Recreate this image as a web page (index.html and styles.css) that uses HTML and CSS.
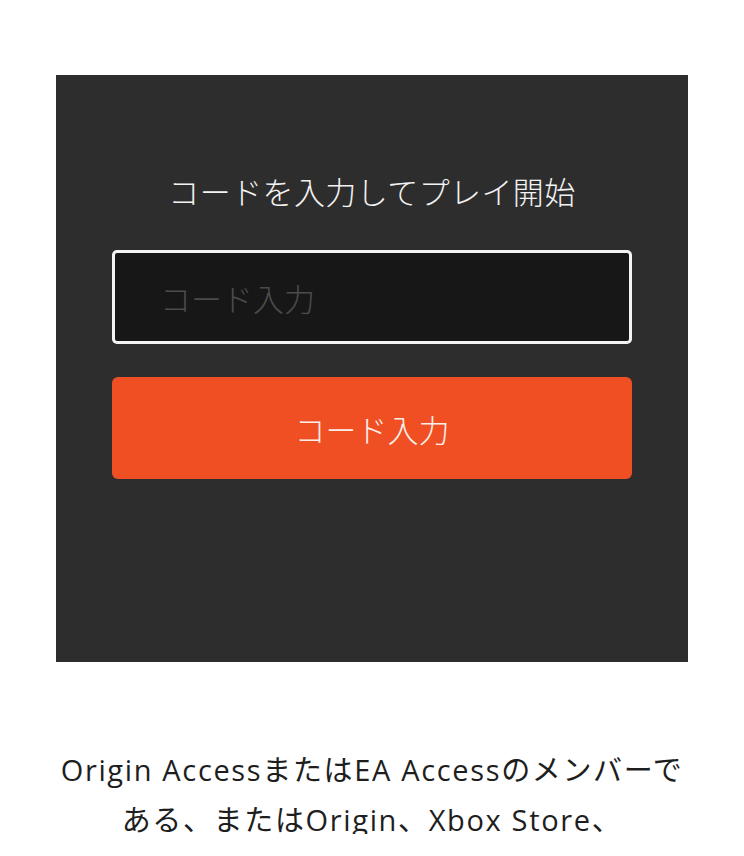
FILE: index.html
```html
<!DOCTYPE html>
<html lang="ja">
<head>
<meta charset="utf-8">
<title>コード入力</title>
<link rel="stylesheet" href="styles.css">
</head>
<body>
<main class="page">
  <section class="panel">
    <h1 class="panel-title">コードを入力してプレイ開始</h1>
    <input class="code-input" type="text" placeholder="コード入力">
    <button class="code-button" type="button">コード入力</button>
  </section>
  <div class="info-clip">
    <p class="info">Origin AccessまたはEA Accessのメンバーである、またはOrigin、Xbox Store、PlayStation Storeで購入した場合</p>
  </div>
</main>
</body>
</html>
```
FILE: styles.css
```css
html, body {
  margin: 0;
  padding: 0;
  background: #ffffff;
}
body {
  font-family: "Noto Sans CJK JP", "Noto Sans", sans-serif;
  width: 744px;
  height: 856px;
  overflow: hidden;
}
.page {
  display: flex;
  flex-direction: column;
  align-items: center;
  padding-top: 75px;
}
.panel {
  box-sizing: border-box;
  width: 632px;
  height: 587px;
  background: #2d2d2d;
  display: flex;
  flex-direction: column;
  align-items: center;
  padding-top: 94px;
}
.panel-title {
  margin: 0;
  font-size: 31px;
  font-weight: 300;
  letter-spacing: 0.4px;
  line-height: 44px;
  color: #f2f2f2;
  text-align: center;
}
.code-input {
  box-sizing: border-box;
  margin-top: 37px;
  width: 520px;
  height: 94px;
  background: #171717;
  border: 3px solid #f4f4f4;
  border-radius: 5px;
  padding: 0 0 0 45px;
  font-family: "Noto Sans CJK JP", "Noto Sans", sans-serif;
  font-size: 31px;
  font-weight: 300;
  color: #ffffff;
  outline: none;
}
.code-input::placeholder {
  color: #4b4b4b;
}
.code-button {
  box-sizing: border-box;
  margin-top: 33px;
  width: 520px;
  height: 102px;
  background: #ef4f23;
  border: none;
  border-radius: 6px;
  font-family: "Noto Sans CJK JP", "Noto Sans", sans-serif;
  font-size: 31px;
  font-weight: 300;
  color: #fbeee8;
  padding: 0;
}
.info-clip {
  margin-top: 83px;
  width: 640px;
  height: 89px;
  overflow: hidden;
}
.info {
  margin: 0;
  font-family: "Open Sans", "Noto Sans CJK JP", sans-serif;
  font-size: 29px;
  font-weight: 400;
  letter-spacing: 1.65px;
  line-height: 50px;
  color: #1e1e1e;
  text-align: center;
}
```
